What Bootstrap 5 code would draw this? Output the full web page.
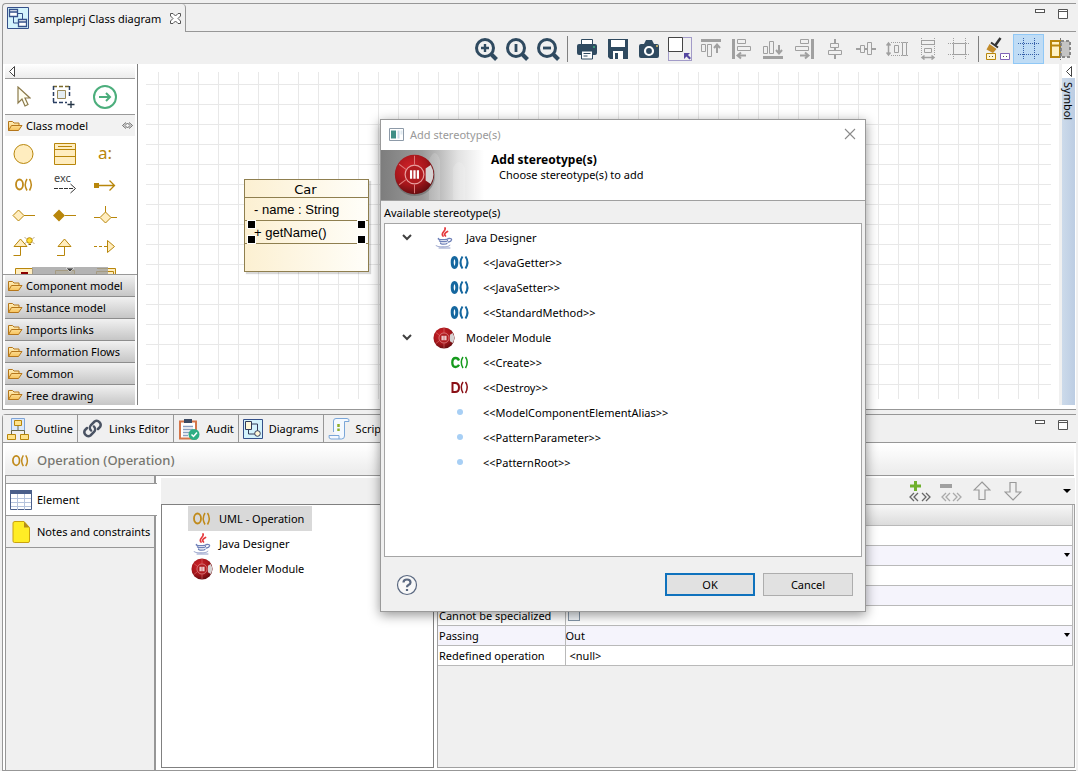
<!DOCTYPE html>
<html lang="en">
<head>
<meta charset="utf-8">
<meta name="viewport" content="width=device-width, initial-scale=1">
<title>sampleprj Class diagram</title>
<link rel="stylesheet" href="https://cdn.jsdelivr.net/npm/bootstrap@5.3.0/dist/css/bootstrap.min.css">
<style>
  :root { --line: #979797; --face: #f0f0f0; }
  body { font: 11px/15px "Noto Sans", "Open Sans", sans-serif; color: #000; background: var(--face); padding: 3px 2px 0 2px; }
  button { font: inherit; color: inherit; }
  svg { display: block; flex: none; }
  .tool { border: 0; background: none; padding: 0; display: flex; align-items: center; justify-content: center; }

  /* editor part */
  .editor { border: 1px solid var(--line); border-right: 0; border-top-left-radius: 4px; }
  .editor-tab { height: 28px; width: 183px; border-right: 1px solid var(--line); border-top-right-radius: 4px; padding-left: 4px; gap: 5px; }
  .tab-rest { border-bottom: 1px solid var(--line); }
  .pane-controls { gap: 13px; padding: 4px 8px 0 0; }
  .editor-bar { height: 32px; padding: 1px 1px 0 0; }
  .editor-bar .tool { width: 31px; height: 30px; }
  .editor-bar .tool.on { background: #bfdcf5; border: 1px solid #90c8f6; }
  .bar-sep { width: 8px; }
  .bar-sep::after { content: ""; display: block; width: 1px; height: 26px; margin: 0 auto; background: #808080; }
  .work { background: #fff; padding-bottom: 4px; }

  /* palette */
  .palette { width: 135px; border-right: 1px solid #808080; flex: none; }
  .palette-top { height: 15px; margin: 0 2px; padding-left: 4px; background: linear-gradient(#fff, #ececec); border-bottom: 1px solid #999; }
  .palette-tools { height: 36px; margin: 0 2px; border-bottom: 1px solid #999; }
  .palette-tools .tool, .palette-grid .tool { width: 41px; height: 31px; }
  .palette-tools .tool { height: 35px; }
  .palette-tools .tool:first-child { width: 38px; }
  .drawer { height: 22px; margin: 0 2px; padding: 0 2px; border: 0; border-bottom: 1px solid #8d8d8d; background: linear-gradient(#f1f1f1, #c6c6c6); display: flex; align-items: center; gap: 3px; width: 130px; text-align: left; }
  .drawer.open { height: 21px; background: #f2f2f2; border: 0; }
  .drawer:last-child { border: 0; height: 20px; }
  .palette-grid { height: 139px; overflow: hidden; padding-top: 2px; border-bottom: 1px solid #999; }
  .more-strip { left: 29px; right: 29px; bottom: 0; height: 7px; background: rgba(160,160,160,.8); }

  /* canvas */
  .canvas { margin: 8px 8px 6px 8px; background-image: linear-gradient(90deg, #e8e8e8 1px, transparent 1px), linear-gradient(#e8e8e8 1px, transparent 1px); background-size: 20px 20px; background-position: 12px 12px; }
  .uml { left: 98px; top: 107px; width: 125px; border: 1px solid #8f7f4f; background: linear-gradient(90deg, #fcf0d2, #fffef9); box-shadow: 2px 2px 1px rgba(0,0,0,.15); font: 13px/24px "Liberation Sans", Arial, sans-serif; }
  .uml > div { height: 23px; border-bottom: 1px solid #8f7f4f; padding-left: 9px; }
  .uml > .uml-title { height: 18px; padding: 0 2px 0 0; font: 13px/19px "DejaVu Sans", sans-serif; }
  .uml > .uml-rest { height: 27px; border: 0; }
  .grip { position: absolute; width: 7px; height: 7px; background: #000; outline: 1px solid #fff; }
  .symbol-rail { width: 13px; margin-right: 1px; background: linear-gradient(90deg, #ccdaea, #bccde3); }
  .rail-gap { background: var(--face); width: 3px; }
  .rail-top { height: 14px; background: #fff; }
  .rail-label { writing-mode: vertical-rl; line-height: 13px; padding-top: 4px; }

  /* properties part */
  .props { margin-top: 4px; border: 1px solid var(--line); border-right: 0; border-top-left-radius: 4px; background: #fff; flex: 1 0 auto; }
  .view-tabs { background: var(--face); border-bottom: 1px solid var(--line); height: 28px; }
  .view-tab { border: 0; border-right: 1px solid var(--line); background: none; display: flex; align-items: center; gap: 6px; padding: 0 4px 0 4px; white-space: nowrap; }
  .props-title { height: 33px; background: linear-gradient(#fff 5%, #ededed 90%); border-bottom: 1px solid var(--line); padding-left: 6px; gap: 7px; font-size: 13px; font-weight: 500; color: #76766f; margin: 0 2px; padding-top: 3px; }
  .side { width: 151px; flex: none; margin-left: 2px; background: var(--face); border-left: 1px solid var(--line); border-right: 2px solid var(--line); padding-top: 7px; }
  .side-tab { display: flex; align-items: center; gap: 5px; height: 32px; padding-left: 4px; border: 0; border-bottom: 1px solid var(--line); background: var(--face); white-space: nowrap; width: 148px; }
  .side-tab.on { background: #fff; border-top: 1px solid var(--line); width: 151px; height: 33px; z-index: 1; }
  .main-area { margin: 2px 1px 2px 5px; }
  .inner-bar { height: 26px; background: var(--face); padding-right: 1px; }
  .inner-bar .tool { width: 31px; }
  .inner-bar .menu-caret { width: 14px; margin-left: 32px; }
  .tree { width: 273px; flex: none; border: 1px solid #808080; background: #fff; padding: 1px 0 0 26px; }
  .tree-item { height: 25px; display: flex; align-items: center; gap: 6px; padding: 0 8px 0 3px; width: max-content; color: #000; text-decoration: none; }
  .tree-item.on { background: #d9d9d9; }
  .sheet { margin-left: 3px; border: 1px solid #a0a0a0; background: var(--face); padding: 0 1px 0 0; }
  .prop-table { --bs-table-bg: transparent; table-layout: fixed; color: #000; border-right: 1px solid #b9b9b9; }
  .prop-table > :not(caption) > * > * { height: 20px; padding: 0 0 0 1px; border-bottom: 1px solid #b9b9b9; line-height: 19px; font-weight: 400; white-space: nowrap; color: #000; }
  .prop-table > thead > tr { background: linear-gradient(#f7f7f7, #dcdcdc); }
  .prop-table > tbody > tr { background: #fff; }
  .prop-table > tbody > tr:nth-child(even) { background: #f5f4fc; }
  .prop-table > tbody > tr > td { border-left: 1px solid #b9b9b9; }
  .prop-table select { appearance: none; display: block; border: 0; width: 100%; height: 19px; padding: 0; font: inherit; color: #000; background: url("data:image/svg+xml,%3Csvg xmlns='http://www.w3.org/2000/svg' width='6' height='4'%3E%3Cpath d='M0 0h6L3 4z'/%3E%3C/svg%3E") no-repeat right 2px center; }
  .prop-table input { appearance: none; display: block; width: 12px; height: 12px; border: 1px solid #8496a8; background: #f1f5f9; margin: 3px 0 0 1px; }

  /* dialog */
  .dlg { left: 380px; top: 119px; width: 486px; background: var(--face); border: 1px solid #9a9a9a; box-shadow: 0 3px 11px rgba(0,0,0,.42); z-index: 5; }
  .dlg-title { height: 30px; background: #fff; color: #999; padding: 0 9px 2px 8px; gap: 6px; }
  .dlg-banner { background: #fff; height: 51px; border-bottom: 1px solid #a0a0a0; gap: 7px; }
  .dlg-heading { font: 700 12px/15px "Noto Sans", sans-serif; margin: 2px 0 0; }
  .dlg-caption { padding: 4px 3px 3px; }
  .dlg-list { min-height: 334px; margin: 0 3px; background: #fff; border: 1px solid #a5a5a5; padding-top: 1px; }
  .dlg-list li { height: 25px; display: flex; align-items: center; }
  .dlg-list .parent { padding-left: 16px; }
  .dlg-list .parent svg + svg { margin: 0 11px 0 20px; }
  .dlg-list .child { padding-left: 64px; gap: 12px; }
  .dlg-foot { height: 54px; padding: 1px 12px 0 15px; gap: 8px; }
  .dlg-btn { width: 90px; height: 23px; border: 1px solid #adadad; border-radius: 0; background: #e1e1e1; padding: 0; font-size: 11px; line-height: 15px; color: #000; }
  .dlg-btn.main { border: 2px solid #0f72bd; }
</style>
</head>
<body class="d-flex flex-column min-vh-100 position-relative">

<svg width="0" height="0" class="position-absolute" aria-hidden="true">
  <defs>
    <radialGradient id="red" cx=".4" cy=".35" r=".7"><stop offset="0" stop-color="#d2232a"/><stop offset=".6" stop-color="#a5161b"/><stop offset="1" stop-color="#5c0b0e"/></radialGradient>
    <linearGradient id="fold" x2="0" y2="1"><stop offset="0" stop-color="#fff0bd"/><stop offset="1" stop-color="#f7c35c"/></linearGradient>
    <linearGradient id="fade"><stop offset="0" stop-color="#7d7d7d"/><stop offset=".4" stop-color="#9a9a9a"/><stop offset=".75" stop-color="#e2e2e2"/><stop offset="1" stop-color="#fff"/></linearGradient>
    <symbol id="folder" viewBox="0 0 16 14"><path d="M1.5 11.5v-9h4l1.500 1.500h5v2.500M1.500 11.500l3-5h10.500l-3.500 5z" fill="url(#fold)" stroke="#b5761a"/></symbol>
    <symbol id="module" viewBox="0 0 24 24"><circle cx="12" cy="12" r="11.500" fill="url(#red)"/><path d="M18.500 8.500l3-2a11 11 0 0 1 0 11l-3-2z" fill="#d6d2d2"/><path d="M12 1v5M3 6l4 3M3 18l4-3M12 18v5" stroke="#d77" stroke-width=".6"/><circle cx="12" cy="12" r="5.500" fill="#b01c20" stroke="#e8a0a0" stroke-width=".7"/><path d="M10 9.500v5M12 9.500v5M14 9.500v5" stroke="#fff" stroke-width="1.300"/></symbol>
    <symbol id="java" viewBox="0 0 20 22"><g fill="none" stroke-linecap="round"><path d="M11 1c1.500 3-5 4.500-2 8M13.500 4.500c-3 1.500-3.500 3-2 4.500" stroke="#e5393d" stroke-width="1.700"/><path d="M4.500 11.500c-2 1.500 10 1.500 9.500 0M5.500 13.500c-1 1.500 8 1.500 8 0M6.500 16c-.5 1.500 6 1.500 6.500.2M15 11.500c4-.5 3 3-.5 3.500" stroke="#6f80b8" stroke-width="1.300"/><path d="M2 18.500c0 2 14 2 14-.3M5 21h11" stroke="#8e9ac6"/></g></symbol>
    <symbol id="op" viewBox="0 0 20 18"><g fill="none" stroke="#c08a1a"><ellipse cx="5.500" cy="8.500" rx="3.500" ry="5" stroke-width="1.800"/><path d="M13 3q-3.500 5.500 0 11.500M15.500 3q3.500 5.500 0 11.500" stroke-width="1.500"/></g></symbol>
    <symbol id="minwin" viewBox="0 0 10 12"><rect x=".5" y="1.500" width="9" height="3" fill="#fff" stroke="#555"/></symbol>
    <symbol id="maxwin" viewBox="0 0 10 12"><path d="M.5 1.500h9v9h-9zM.5 3.500h9" fill="#fff" stroke="#555"/></symbol>
    <symbol id="jop" viewBox="0 0 20 16"><g fill="none" stroke="#15679f"><ellipse cx="4.500" cy="7.500" rx="2.300" ry="5" stroke-width="3"/><path d="M12.500 1.500q-4 6 0 12M15.500 1.500q4 6 0 12" stroke-width="2"/></g></symbol>
    <symbol id="dot" viewBox="0 0 20 16"><circle cx="10" cy="7" r="3" fill="#a7cff5"/></symbol>
    <symbol id="chev" viewBox="0 0 12 12"><path d="M2 3l4 4 4-4" fill="none" stroke="#404040" stroke-width="2"/></symbol>
  </defs>
</svg>

<section class="editor" aria-label="Diagram editor">
  <div class="d-flex">
    <div class="editor-tab d-flex align-items-center">
      <svg width="22" height="22" viewBox="0 0 22 22"><path d="M.5.5h21v21H.5z" fill="#d4f3fc" stroke="#355089"/><path d="M2.500 2.500h8v7h-8zM2.500 5h8M11.500 12.500h8v7h-8zM11.500 15h8" fill="#fff" stroke="#355089" stroke-width="1.300"/><path d="M6.500 10v6h5M10.500 6.500h5v6" fill="none" stroke="#355089"/></svg>
      <span class="text-nowrap">sampleprj Class diagram</span>
      <button class="tool ms-1" aria-label="Close tab"><svg width="11" height="11" viewBox="0 0 11 11"><path d="M.5.5h2.500l2.500 2.500L8 .5h2.500V3L8 5.500 10.500 8v2.500H8L5.500 8 3 10.500H.5V8L3 5.500.5 3z" fill="#fff" stroke="#555"/></svg></button>
    </div>
    <div class="tab-rest flex-grow-1 d-flex justify-content-end">
      <div class="pane-controls d-flex align-items-start">
        <button class="tool" aria-label="Minimize editor"><svg width="10" height="12"><use href="#minwin"/></svg></button>
        <button class="tool" aria-label="Maximize editor"><svg width="10" height="12"><use href="#maxwin"/></svg></button>
      </div>
    </div>
  </div>

  <div class="editor-bar d-flex justify-content-end align-items-center" role="toolbar" aria-label="Diagram tools">
    <button class="tool" aria-label="Zoom in"><svg width="24" height="24" viewBox="0 0 24 24" fill="none" stroke="#2f4a60" stroke-width="3"><circle cx="11" cy="11" r="8.500"/><path d="M17 17l5.500 5.500" stroke-width="4"/><path d="M7 11h8M11 7v8" stroke-width="2.400"/></svg></button>
    <button class="tool" aria-label="Zoom to 100%"><svg width="24" height="24" viewBox="0 0 24 24" fill="none" stroke="#2f4a60" stroke-width="3"><circle cx="11" cy="11" r="8.500"/><path d="M17 17l5.500 5.500" stroke-width="4"/><path d="M11 7v8" stroke-width="2.800"/></svg></button>
    <button class="tool" aria-label="Zoom out"><svg width="24" height="24" viewBox="0 0 24 24" fill="none" stroke="#2f4a60" stroke-width="3"><circle cx="11" cy="11" r="8.500"/><path d="M17 17l5.500 5.500" stroke-width="4"/><path d="M7 11h8" stroke-width="2.800"/></svg></button>
    <div class="bar-sep"></div>
    <button class="tool" aria-label="Print"><svg width="22" height="22" viewBox="0 0 22 22"><path d="M5.500 1.500h11V8h-11z" fill="#fff" stroke="#2f4a60"/><rect x="1" y="6" width="20" height="11" rx="2" fill="#2f4a60"/><path d="M5.500 13h11v8h-11z" fill="#fff" stroke="#2f4a60"/><path d="M7.500 15.500h7M7.500 18h4" stroke="#2f4a60"/><circle cx="18" cy="9" r="1" fill="#3fb57f"/></svg></button>
    <button class="tool" aria-label="Save"><svg width="22" height="22" viewBox="0 0 22 22"><path d="M1 1h20v20H3l-2-2z" fill="#2f4a60"/><path d="M4 2h14v7H4z" fill="#fff"/><path d="M6 13h10v8H6z" fill="#fff"/><path d="M8 15h3v6H8z" fill="#2f4a60"/></svg></button>
    <button class="tool" aria-label="Save as image"><svg width="22" height="22" viewBox="0 0 22 22"><path d="M6 6l2-4h6l2 4h3a2 2 0 0 1 2 2v10a2 2 0 0 1-2 2H3a2 2 0 0 1-2-2V8a2 2 0 0 1 2-2z" fill="#2f4a60"/><circle cx="11" cy="13" r="4" fill="#2f4a60" stroke="#fff" stroke-width="2.200"/><circle cx="19" cy="8" r="1" fill="#e8c96a"/></svg></button>
    <button class="tool" aria-label="Select area"><svg width="24" height="24" viewBox="0 0 24 24"><path d="M.5.500h23v23H.500z" fill="none" stroke="#5547a0" stroke-dasharray="1 1"/><path d="M.500.500h14v14H.500z" fill="#fff" stroke="#444"/><path d="M16 16h6l-2 2 3 3-1.500 1.500-3-3L16 22z" fill="#5547a0"/></svg></button>
    <button class="tool" aria-label="Align top"><svg width="22" height="22" viewBox="0 0 22 22" fill="none" stroke="#a0a0a0"><path d="M1 2.500h20" stroke-width="3"/><path d="M1.500 6.500h4v7h-4zM7.500 6.500h4v12h-4z"/><path d="M17 15V7M14 10l3-3.500L20 10" stroke-width="2"/></svg></button>
    <button class="tool" aria-label="Align left"><svg width="22" height="22" viewBox="0 0 22 22" fill="none" stroke="#a0a0a0"><path d="M2.500 1v20" stroke-width="3"/><path d="M6.500 1.500h8v4h-8zM6.500 8.500h13v4h-13z"/><path d="M15 17.500H7M10 14.500l-3.500 3 3.500 3" stroke-width="2"/></svg></button>
    <button class="tool" aria-label="Align bottom"><svg width="22" height="22" viewBox="0 0 22 22" fill="none" stroke="#a0a0a0"><path d="M1 19.500h20" stroke-width="3"/><path d="M1.500 8.500h4v7h-4zM7.500 3.500h4v12h-4z"/><path d="M17 7v8M14 12l3 3.500 3-3.500" stroke-width="2"/></svg></button>
    <button class="tool" aria-label="Align right"><svg width="22" height="22" viewBox="0 0 22 22" fill="none" stroke="#a0a0a0"><path d="M19.500 1v20" stroke-width="3"/><path d="M7.500 1.500h8v4h-8zM2.500 8.500h13v4h-13z"/><path d="M7 17.500h8M12 14.500l3.500 3-3.500 3" stroke-width="2"/></svg></button>
    <button class="tool" aria-label="Center horizontally"><svg width="22" height="22" viewBox="0 0 22 22" fill="none" stroke="#a0a0a0"><path d="M11 1v4M11 9v4M11 17v4" stroke-width="2"/><path d="M6.500 5.500h8v4h-8zM4.500 12.500h13v4h-13z"/></svg></button>
    <button class="tool" aria-label="Center vertically"><svg width="22" height="22" viewBox="0 0 22 22" fill="none" stroke="#a0a0a0"><path d="M1 11h4M9 11h3M17 11h4" stroke-width="2"/><path d="M5.500 7.500h4v7h-4zM12.500 4.500h4v12h-4z"/></svg></button>
    <button class="tool" aria-label="Same height"><svg width="22" height="22" viewBox="0 0 22 22" fill="none" stroke="#a0a0a0"><path d="M5 4.500h17M5 17.500h17" stroke-dasharray="1 1"/><path d="M2.500 5v12M.5 7.500l2-2.500 2 2.500M.5 14.500l2 2.500 2-2.500" stroke-width="1.500"/><path d="M8.500 7.500h4v7h-4zM16.500 4.500h4v13h-4z"/></svg></button>
    <button class="tool" aria-label="Same width"><svg width="22" height="22" viewBox="0 0 22 22" fill="none" stroke="#a0a0a0"><path d="M4.500 0v17M17.500 0v17" stroke-dasharray="1 1"/><path d="M5 19.500h12M7.500 17.500L5 19.500l2.500 2M14.500 17.500l2.500 2-2.500 2" stroke-width="1.500"/><path d="M4.500 2.500h13v4h-13zM7.500 10.500h7v4h-7z"/></svg></button>
    <button class="tool" aria-label="Same size"><svg width="22" height="22" viewBox="0 0 22 22" fill="none" stroke="#a0a0a0"><path d="M5.500 0v22M17.500 0v22M0 5.500h22M0 16.500h22" stroke-dasharray="1 1"/><path d="M5.500 5.500h12v11h-12z" fill="#f0f0f0"/></svg></button>
    <div class="bar-sep"></div>
    <button class="tool" aria-label="Format painter"><svg width="26" height="24" viewBox="0 0 26 24"><path d="M15.500 1l-5 7" stroke="#333" stroke-width="2.500"/><path d="M6 5.500l7 5" stroke="#333" stroke-width="2"/><path d="M4.500 7l7 5-3.500 4-6.500-3.500z" fill="#c28b2a"/><path d="M1.500 16.500h9v6h-9z" fill="#fff6d8" stroke="#b8860b"/><path d="M15.500 16.500h9v6h-9z" fill="#fff" stroke="#8064b8"/><path d="M4 19.500h1M7 19.500h1M18 19.500h1M21 19.500h1" stroke="#555"/></svg></button>
    <button class="tool on" aria-label="Show grid" aria-pressed="true"><svg width="22" height="22" viewBox="0 0 22 22" fill="none" stroke="#355fa8"><path d="M5.500 0v22M16.500 0v22M0 5.500h22M0 16.500h22" stroke-dasharray="1 1"/></svg></button>
    <button class="tool" aria-label="Page layout"><svg width="22" height="22" viewBox="0 0 22 22"><path d="M2 3h9v16H2z" fill="#fff2c4" stroke="#b8860b" stroke-width="2"/><path d="M1 7.500h10" stroke="#b8860b" stroke-width="2"/><path d="M12 3h9v16h-9z" fill="#c4c4c4" stroke="#888" stroke-width="2" stroke-dasharray="3 2"/><path d="M11.500 0v22" stroke="#777" stroke-dasharray="2 1"/></svg></button>
  </div>

  <div class="work d-flex">
    <nav class="palette" aria-label="Palette">
      <div class="palette-top d-flex align-items-center"><svg width="6" height="11" viewBox="0 0 6 11"><path d="M5.500.5v10L.5 5.500z" fill="#fff" stroke="#444"/></svg></div>
      <div class="palette-tools d-flex">
        <button class="tool" aria-label="Select"><svg width="14" height="22" viewBox="0 0 14 22"><path d="M1 1v16l4-4 3 7 3-1.500-3-6.500h5z" fill="#fffef0" stroke="#8b7a4a" stroke-width="1.200"/></svg></button>
        <button class="tool" aria-label="Marquee"><svg width="24" height="24" viewBox="0 0 24 24" fill="none"><path d="M1 1.500h17" stroke="#7a6a2a" stroke-width="1.500" stroke-dasharray="4 2"/><path d="M1.500 1v17M17.500 1v12M1 17.500h14" stroke="#2a3f63" stroke-width="1.500" stroke-dasharray="4 2"/><path d="M5.500 5.500h8v8h-8z" fill="#e4edf3" stroke="#9a8a5a"/><path d="M19 16v7M15.500 19.500h7" stroke="#234" stroke-width="1.300"/></svg></button>
        <button class="tool" aria-label="Create link"><svg width="24" height="24" viewBox="0 0 24 24" fill="none" stroke="#4cae7c" stroke-width="2"><circle cx="12" cy="12" r="11"/><path d="M6 12h11M13 8l4 4-4 4"/></svg></button>
      </div>
      <button class="drawer open" aria-expanded="true"><svg width="16" height="14"><use href="#folder"/></svg>Class model<svg class="ms-auto" width="11" height="7" viewBox="0 0 11 7"><path d="M4 .5L.5 3.500 4 6.500M7 .5l3.500 3L7 6.500M3 3.500L5.500 1 8 3.500 5.500 6z" fill="none" stroke="#666"/></svg></button>
      <div class="palette-grid d-flex flex-wrap position-relative align-content-start">
        <button class="tool" aria-label="Class"><svg width="22" height="22" viewBox="0 0 22 22"><circle cx="10.500" cy="11" r="9.500" fill="#ffedbf" stroke="#b8860b"/></svg></button>
        <button class="tool" aria-label="Interface"><svg width="22" height="22" viewBox="0 0 22 22"><path d="M.5.5h21v21H.5zM.5 6.500h21M.5 13.500h21M4 3.500h14" fill="#ffedbf" stroke="#b8860b"/></svg></button>
        <button class="tool" aria-label="Attribute"><svg width="24" height="28" viewBox="0 0 24 28"><text x="4" y="19" font-size="17" fill="#b8860b">a:</text></svg></button>
        <button class="tool" aria-label="Operation"><svg width="20" height="18"><use href="#op"/></svg></button>
        <button class="tool" aria-label="Raised exception"><svg width="24" height="30" viewBox="0 0 24 30"><text x="1" y="12" font-size="11" fill="#444">exc</text><path d="M1 18.500h19" stroke="#333" stroke-dasharray="4 1"/><path d="M17.500 14l5 4.500-5 4.500" fill="none" stroke="#333"/></svg></button>
        <button class="tool" aria-label="Flow"><svg width="24" height="12" viewBox="0 0 24 12"><path d="M0 4h5v5H0z" fill="#b8860b"/><path d="M5 6.500h15.500M15.500 1.500l5 5-5 5" fill="none" stroke="#b8860b" stroke-width="1.300"/></svg></button>
        <button class="tool" aria-label="Aggregation"><svg width="24" height="14" viewBox="0 0 24 14"><path d="M1 6.500L6.500 1 12 6.500 6.500 12z" fill="#ffedbf" stroke="#b8860b"/><path d="M12 6.500h11" stroke="#b8860b"/></svg></button>
        <button class="tool" aria-label="Composition"><svg width="24" height="14" viewBox="0 0 24 14"><path d="M0 6.500l6-6 6 6-6 6zM12 6h11v1H12z" fill="#b8860b"/></svg></button>
        <button class="tool" aria-label="N-ary association"><svg width="24" height="20" viewBox="0 0 24 20"><path d="M0 11.500h6M17 11.500h6M11.500 0v6" stroke="#b8860b"/><path d="M6 11.500L11.500 6l5.500 5.500-5.500 5.500z" fill="#ffedbf" stroke="#b8860b"/></svg></button>
        <button class="tool" aria-label="Smart generalization"><svg width="22" height="22" viewBox="0 0 22 22"><path d="M1 10.500L7.500 3l6.500 7.500z" fill="#ffedbf" stroke="#b8860b"/><path d="M7.500 10.500v9H.500" fill="none" stroke="#b8860b"/><circle cx="16.500" cy="4.500" r="2.800" fill="#ffe135" stroke="#b8860b"/><path d="M15.500 8.500H18M12 1.500l1 1M21 1.500l-1 1M12 7.500l1-1M21 7.500l-1-1" stroke="#7a5a10"/></svg></button>
        <button class="tool" aria-label="Generalization"><svg width="22" height="22" viewBox="0 0 22 22"><path d="M4 10.500L10.500 3l6.500 7.500z" fill="#ffedbf" stroke="#b8860b"/><path d="M10.500 10.500v9H3" fill="none" stroke="#b8860b"/></svg></button>
        <button class="tool" aria-label="Realization"><svg width="24" height="14" viewBox="0 0 24 14"><path d="M0 6.500h13" stroke="#b8860b" stroke-dasharray="3 2"/><path d="M13.500.500v12l7-6z" fill="#ffedbf" stroke="#b8860b"/></svg></button>
        <button class="tool" aria-label="Package"><svg width="18" height="20" viewBox="0 0 18 20"><path d="M.5.5h17v19H.5z" fill="#ffedbf" stroke="#b8860b"/><path d="M6 4h7v5H6z" fill="#8b0000"/></svg></button>
        <button class="tool" aria-label="Component"><svg width="20" height="20" viewBox="0 0 20 20"><path d="M.5 2.500h19v17H.5z" fill="#ffedbf" stroke="#b8860b"/></svg></button>
        <button class="tool" aria-label="Node"><svg width="20" height="20" viewBox="0 0 20 20"><path d="M.5 3.500h17v16H.5zM1 .5h18.500v16" fill="#ffedbf" stroke="#b8860b"/></svg></button>
        <div class="more-strip position-absolute d-flex justify-content-center"><svg width="8" height="5" viewBox="0 0 8 5"><path d="M0 1h8L4 5z" fill="#444" stroke="#fff" stroke-width=".6"/></svg></div>
      </div>
      <button class="drawer"><svg width="16" height="14"><use href="#folder"/></svg>Component model</button>
      <button class="drawer"><svg width="16" height="14"><use href="#folder"/></svg>Instance model</button>
      <button class="drawer"><svg width="16" height="14"><use href="#folder"/></svg>Imports links</button>
      <button class="drawer"><svg width="16" height="14"><use href="#folder"/></svg>Information Flows</button>
      <button class="drawer"><svg width="16" height="14"><use href="#folder"/></svg>Common</button>
      <button class="drawer"><svg width="16" height="14"><use href="#folder"/></svg>Free drawing</button>
    </nav>

    <div class="canvas flex-grow-1 position-relative">
      <div class="uml position-absolute">
        <div class="uml-title text-center">Car</div>
        <div>- name : String</div>
        <div class="position-relative">+ getName()
          <span class="grip" style="left:3px;top:0"></span><span class="grip" style="right:3px;top:0"></span>
          <span class="grip" style="left:3px;bottom:0"></span><span class="grip" style="right:3px;bottom:0"></span>
        </div>
        <div class="uml-rest"></div>
      </div>
    </div>
    <div class="rail-gap"></div>
    <div class="symbol-rail">
      <div class="rail-top d-flex align-items-center justify-content-center"><svg width="6" height="11" viewBox="0 0 6 11"><path d="M5.500.5v10L.5 5.500z" fill="#fff" stroke="#444"/></svg></div>
      <div class="rail-label">Symbol</div>
    </div>
  </div>
</section>

<section class="props d-flex flex-column" aria-label="Properties">
  <div class="view-tabs d-flex">
    <button class="view-tab"><svg width="22" height="22" viewBox="0 0 22 22"><path d="M4.500.5h13v12h-13z" fill="#dbe9fb" stroke="#7fa4d6"/><path d="M7.500 2.500h7v5h-7zM.5 16.500h8v5h-8zM13.500 16.500h8v5h-8z" fill="#ffe38a" stroke="#b8860b"/><path d="M11 8v5M4.500 16v-3.500h13V16" fill="none" stroke="#6a6a4a"/></svg>Outline</button>
    <button class="view-tab"><svg width="21" height="21" viewBox="0 0 21 21" fill="none" stroke="#4a5363" stroke-width="2.500" stroke-linecap="round"><path d="M9 12.500a4 4 0 0 1 0-5.500l3.500-3.500a4 4 0 0 1 5.500 5.500l-2 2"/><path d="M12 8.500a4 4 0 0 1 0 5.500l-3.500 3.500a4 4 0 0 1-5.500-5.500l2-2"/></svg>Links Editor</button>
    <button class="view-tab"><svg width="22" height="22" viewBox="0 0 22 22"><path d="M2 3.500h16v17H2z" fill="#fff" stroke="#d5764a" stroke-width="2"/><path d="M6 1h8v4H6z" fill="#3b4a63"/><path d="M5 8.500h10M5 11.500h10M5 14.500h6M5 17.500h5" stroke="#8aa0c0" stroke-width="1.300"/><circle cx="16" cy="16.500" r="5.500" fill="#2fae84"/><path d="M13.500 16.500l2 2 3.500-4" fill="none" stroke="#fff" stroke-width="1.500"/></svg>Audit</button>
    <button class="view-tab"><svg width="20" height="20" viewBox="0 0 20 20"><path d="M.5.5h19v19H.5z" fill="#d4f3fc" stroke="#355089"/><path d="M2.500 2.500h6v8h-6z" fill="#fff8d8" stroke="#333c5a"/><path d="M5.500 10.500V15H12M8.500 5h6v7" fill="none" stroke="#333c5a"/><circle cx="14.500" cy="14.500" r="2.800" fill="#fff8d8" stroke="#333c5a"/></svg>Diagrams</button>
    <button class="view-tab"><svg width="22" height="22" viewBox="0 0 22 22" fill="#f4f9ff" stroke="#7aa6d8"><path d="M5.500 14V3q0-2.500 2.500-2.500h11q2.500 0 2 3h-4.500V18q0 3-3 3H3q-2.500 0-2-3.500h10V21"/><path d="M10.500 6v3M10.500 10.500v2.500" stroke="#8fae2a" stroke-width="2.500"/></svg>Script</button>
    <div class="pane-controls ms-auto d-flex align-items-start">
      <button class="tool" aria-label="Minimize view"><svg width="10" height="12"><use href="#minwin"/></svg></button>
      <button class="tool" aria-label="Maximize view"><svg width="10" height="12"><use href="#maxwin"/></svg></button>
    </div>
  </div>
  <div class="props-title d-flex align-items-center"><svg width="19" height="18"><use href="#op"/></svg>Operation (Operation)</div>

  <div class="d-flex flex-grow-1">
    <div class="side">
      <button class="side-tab on position-relative"><svg width="22" height="20" viewBox="0 0 22 20"><path d="M.5.5h21v19H.5z" fill="#fff" stroke="#4b5f8a"/><path d="M0 0h22v4H0z" fill="#4b5f8a"/><path d="M7.500 4v16M14.500 4v16M1 8.500h20M1 12.500h20M1 16.500h20" stroke="#b5c3dc"/></svg>Element</button>
      <button class="side-tab"><svg width="22" height="22" viewBox="0 0 22 22"><path d="M5 .5h9l5.500 6V20q0 1.500-1.500 1.500H4.500Q3 21.500 3 20V2Q3 .5 5 .5z" fill="#ffed26" stroke="#c9a210"/><path d="M14 .5v6h5.500z" fill="#b58e18"/></svg>Notes and constraints</button>
    </div>
    <div class="main-area flex-grow-1 d-flex flex-column">
      <div class="inner-bar d-flex justify-content-end align-items-center">
        <button class="tool" aria-label="Add stereotype"><svg width="22" height="22" viewBox="0 0 22 22" fill="none"><path d="M1 6h11M6.500 1v10" stroke="#6fb02c" stroke-width="3"/><path d="M5 13l-4 4 4 4M9 13l-4 4 4 4M13 13l4 4-4 4M17 13l4 4-4 4" stroke="#666" stroke-width="1.300"/></svg></button>
        <button class="tool" aria-label="Remove stereotype"><svg width="22" height="22" viewBox="0 0 22 22" fill="none"><path d="M0 6h12" stroke="#a0a0a0" stroke-width="4"/><path d="M6 13l-4 4 4 4M10 13l-4 4 4 4M13 13l4 4-4 4M17 13l4 4-4 4" stroke="#aaa" stroke-width="1.300"/></svg></button>
        <button class="tool" aria-label="Move up"><svg width="18" height="20" viewBox="0 0 18 20"><path d="M9 1l8 8h-5v9.500H6V9H1z" fill="none" stroke="#999" stroke-width="1.200"/></svg></button>
        <button class="tool" aria-label="Move down"><svg width="18" height="20" viewBox="0 0 18 20"><path d="M9 19l8-8h-5V1.500H6V11H1z" fill="none" stroke="#999" stroke-width="1.200"/></svg></button>
        <button class="tool menu-caret" aria-label="View menu"><svg width="8" height="4" viewBox="0 0 8 4"><path d="M0 0h8L4 4z"/></svg></button>
      </div>
      <div class="d-flex flex-grow-1">
        <div class="tree">
          <a href="#" class="tree-item on"><svg width="22" height="18" viewBox="0 0 22 18"><use href="#op" width="22" height="18"/></svg>UML - Operation</a>
          <a href="#" class="tree-item"><svg width="22" height="22"><use href="#java" width="22" height="22"/></svg>Java Designer</a>
          <a href="#" class="tree-item"><svg width="22" height="22"><use href="#module"/></svg>Modeler Module</a>
        </div>
        <div class="sheet flex-grow-1">
          <table class="table prop-table mb-0 w-100">
            <colgroup><col style="width:127px"><col></colgroup>
            <thead><tr><th></th><th></th></tr></thead>
            <tbody>
              <tr><td class="border-start-0"></td><td></td></tr>
              <tr><td class="border-start-0"></td><td><select aria-label="Visibility"><option></option></select></td></tr>
              <tr><td class="border-start-0"></td><td></td></tr>
              <tr><td class="border-start-0"></td><td></td></tr>
              <tr><td class="border-start-0"><label for="nospec">Cannot be specialized</label></td><td class="align-top"><input type="checkbox" id="nospec"></td></tr>
              <tr><td class="border-start-0"><label for="passing">Passing</label></td><td class="ps-0"><select id="passing"><option>Out</option></select></td></tr>
              <tr><td class="border-start-0">Redefined operation</td><td class="ps-1">&lt;null&gt;</td></tr>
            </tbody>
          </table>
        </div>
      </div>
    </div>
  </div>
</section>

<div class="dlg position-absolute" role="dialog" aria-labelledby="dlgTitle">
  <div class="dlg-title d-flex align-items-center">
    <svg width="15" height="13" viewBox="0 0 15 13"><path d="M.5.500h14v12H.500z" fill="#fff" stroke="#8d9aa8"/><path d="M2 2.500h5v8H2z" fill="#3f8f86"/><path d="M8.500 2.500h2v8h-2z" fill="#c9d9e6"/><path d="M11.500 2.500h2v4h-2z" fill="#dfe8ef"/></svg>
    <span id="dlgTitle">Add stereotype(s)</span>
    <button class="tool ms-auto" aria-label="Close"><svg width="12" height="12" viewBox="0 0 12 12"><path d="M1 1l10 10M11 1L1 11" stroke="#8a8a8a" stroke-width="1.100"/></svg></button>
  </div>
  <div class="dlg-banner d-flex">
    <svg width="103" height="50" viewBox="0 0 103 50"><path d="M0 0h103v50H0z" fill="url(#fade)"/><path d="M48 50V10q6-14 11 0v40zM72 50V18q6-12 12 0v32z" fill="#fff" opacity=".15"/><circle cx="34" cy="26" r="20" fill="#444" opacity=".35"/><svg x="13" y="4" width="41" height="41"><use href="#module"/></svg></svg>
    <div>
      <h1 class="dlg-heading">Add stereotype(s)</h1>
      <div class="ps-2">Choose stereotype(s) to add</div>
    </div>
  </div>
  <div class="dlg-caption" id="listLabel">Available stereotype(s)</div>
  <ul class="dlg-list list-unstyled" aria-labelledby="listLabel">
    <li class="parent"><svg width="12" height="12"><use href="#chev"/></svg><svg width="22" height="22"><use href="#java"/></svg>Java Designer</li>
    <li class="child"><svg width="22" height="16"><use href="#jop"/></svg>&lt;&lt;JavaGetter&gt;&gt;</li>
    <li class="child"><svg width="22" height="16"><use href="#jop"/></svg>&lt;&lt;JavaSetter&gt;&gt;</li>
    <li class="child"><svg width="22" height="16"><use href="#jop"/></svg>&lt;&lt;StandardMethod&gt;&gt;</li>
    <li class="parent"><svg width="12" height="12"><use href="#chev"/></svg><svg width="22" height="22"><use href="#module"/></svg>Modeler Module</li>
    <li class="child"><svg width="22" height="16" viewBox="0 0 22 16" fill="none" stroke="#159a1c"><path d="M10 5.500Q9 3 6.700 3 3.300 3 3.300 7.500T6.700 12Q9 12 10 9.800" stroke-width="2.300"/><path d="M14 2q-3.500 5 0 11M16.500 2q3.500 5 0 11" stroke-width="1.500"/></svg>&lt;&lt;Create&gt;&gt;</li>
    <li class="child"><svg width="22" height="16" viewBox="0 0 22 16" fill="none" stroke="#8a1016"><path d="M3.500 3v9H6q4 0 4-4.500T6 3z" stroke-width="2"/><path d="M14 2q-3.500 5 0 11M16.500 2q3.500 5 0 11" stroke-width="1.500"/></svg>&lt;&lt;Destroy&gt;&gt;</li>
    <li class="child"><svg width="22" height="16"><use href="#dot"/></svg>&lt;&lt;ModelComponentElementAlias&gt;&gt;</li>
    <li class="child"><svg width="22" height="16"><use href="#dot"/></svg>&lt;&lt;PatternParameter&gt;&gt;</li>
    <li class="child"><svg width="22" height="16"><use href="#dot"/></svg>&lt;&lt;PatternRoot&gt;&gt;</li>
  </ul>
  <div class="dlg-foot d-flex align-items-center">
    <button class="tool me-auto" aria-label="Help"><svg width="22" height="22" viewBox="0 0 22 22" fill="none" stroke="#5a6880"><circle cx="11" cy="11" r="9.500" fill="#f8f8f8" stroke-width="1.200"/><path d="M7.500 8.500Q7.500 5.500 11 5.500T14.500 8.500Q14.500 10 12.500 11 11 11.800 11 13.300" stroke-width="2.200"/><path d="M11 15v2" stroke-width="2.200"/></svg></button>
    <button class="btn dlg-btn main">OK</button>
    <button class="btn dlg-btn">Cancel</button>
  </div>
</div>

<script src="https://cdn.jsdelivr.net/npm/bootstrap@5.3.0/dist/js/bootstrap.bundle.min.js"></script>
</body>
</html>
